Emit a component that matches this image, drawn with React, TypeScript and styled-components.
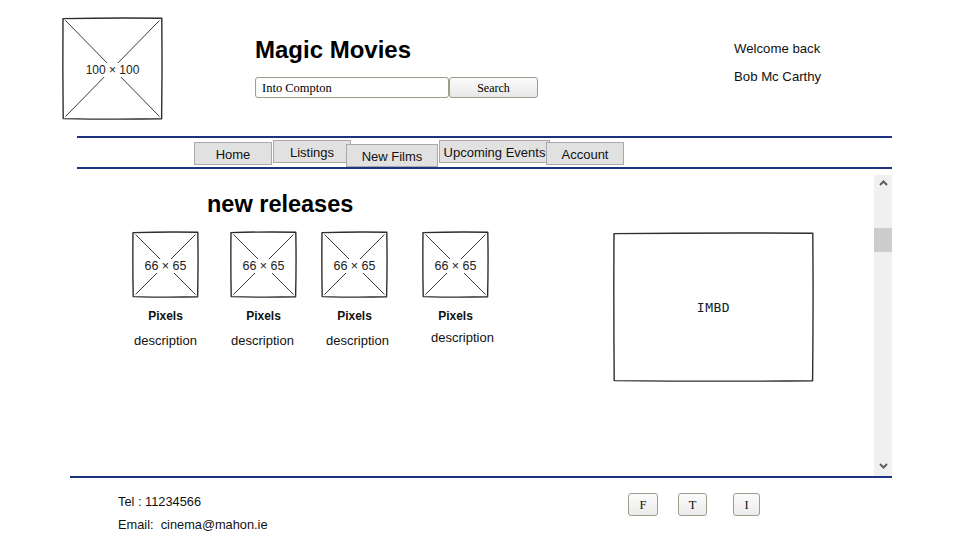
import React from "react";
import styled, { createGlobalStyle } from "styled-components";

const GlobalStyle = createGlobalStyle`
  html, body { margin: 0; padding: 0; background: #fff; }
  body { font-family: "Liberation Sans", Arial, sans-serif; color: #111; }
  * { box-sizing: border-box; }
`;

const NAVY = "#1e3282";

const Page = styled.div`
  width: 977px;
  height: 542px;
  overflow: hidden;
  background: #fff;
`;

const Header = styled.header`
  display: flex;
  align-items: flex-start;
  height: 136px;
  padding: 17px 0 0 62px;
`;

const TitleCol = styled.div`
  width: 479px;
  margin-left: 92px;
  padding-top: 19px;
  display: flex;
  flex-direction: column;
`;

const Title = styled.h1`
  margin: 0;
  font-size: 24px;
  line-height: 28px;
  font-weight: bold;
  color: #000;
`;

const SearchRow = styled.form`
  display: flex;
  margin-top: 13px;
`;

const SearchInput = styled.input`
  width: 194px;
  height: 21px;
  border: 1px solid #a39a8e;
  border-radius: 3px;
  font: 12.5px "Liberation Serif", "Times New Roman", serif;
  padding: 1px 6px 0;
  color: #000;
  outline: none;
  background: #fff;
`;

const SearchButton = styled.button`
  width: 89px;
  height: 21px;
  border: 1px solid #a39a8e;
  border-radius: 3px;
  background: linear-gradient(#fcfcfc, #e8e8e8);
  font: 12px "Liberation Serif", "Times New Roman", serif;
  color: #000;
  padding: 1px 0 0;
`;

const Welcome = styled.div`
  margin-top: 24px;
  display: flex;
  flex-direction: column;
  gap: 12px;
  font-size: 13.2px;
  line-height: 16px;
  color: #111;
`;

const NavBar = styled.nav`
  width: 815px;
  height: 33px;
  margin-left: 77px;
  border-top: 2px solid ${NAVY};
  border-bottom: 2px solid ${NAVY};
  display: flex;
  align-items: flex-start;
  padding-left: 117px;
`;

const Tab = styled.a<{ $w: number; $top: number; $shift: number }>`
  position: relative;
  display: flex;
  align-items: center;
  justify-content: center;
  width: ${(p) => p.$w}px;
  height: 23px;
  padding-top: 2px;
  margin-top: ${(p) => p.$top}px;
  margin-left: ${(p) => p.$shift}px;
  background: #e1e1e1;
  border: 1px solid #a9a9a9;
  font-size: 13px;
  color: #111;
  text-decoration: none;
  white-space: nowrap;
`;

const Main = styled.main`
  display: flex;
  width: 822px;
  height: 309px;
  margin-left: 70px;
  border-bottom: 2px solid ${NAVY};
`;

const Content = styled.section`
  flex: 1;
  padding-top: 21px;
`;

const SectionTitle = styled.h2`
  margin: 0 0 13px 137px;
  font-size: 23.5px;
  line-height: 28px;
  font-weight: bold;
  color: #000;
`;

const Row = styled.div`
  display: flex;
  align-items: flex-start;
`;

const Card = styled.div<{ $gap: number }>`
  width: 67px;
  margin-left: ${(p) => p.$gap}px;
  display: flex;
  flex-direction: column;
  align-items: center;
`;

const CardName = styled.div`
  margin-top: 11px;
  font-size: 12px;
  line-height: 14px;
  font-weight: bold;
  color: #111;
  white-space: nowrap;
`;

const CardDesc = styled.div<{ $dx: number; $dy: number }>`
  margin-top: ${(p) => 10 + p.$dy}px;
  margin-left: ${(p) => p.$dx * 2}px;
  font-size: 13px;
  line-height: 16px;
  color: #111;
  white-space: nowrap;
`;

const Sketch = styled.div<{ $w: number; $h: number; $mt?: number; $ml?: number }>`
  position: relative;
  flex-shrink: 0;
  width: ${(p) => p.$w}px;
  height: ${(p) => p.$h}px;
  margin-top: ${(p) => p.$mt ?? 0}px;
  margin-left: ${(p) => p.$ml ?? 0}px;
  display: flex;
  align-items: center;
  justify-content: center;
`;

const SketchLines = styled.svg`
  position: absolute;
  left: 0;
  top: 0;
  overflow: visible;
`;

const SketchLabel = styled.span<{ $size: number }>`
  position: relative;
  margin-top: 3px;
  background: #fff;
  padding: 1px 1px;
  font-size: ${(p) => p.$size}px;
  line-height: 1;
  color: #222;
  white-space: nowrap;
`;

const ImdbLabel = styled.span`
  position: relative;
  font-family: "DejaVu Sans Mono", "Liberation Mono", monospace;
  font-size: 13px;
  color: #0d1b2a;
  letter-spacing: 0.5px;
`;

const Scrollbar = styled.div`
  width: 18px;
  height: 301px;
  margin-top: 6px;
  background: #f0f0f0;
  display: flex;
  flex-direction: column;
`;

const ScrollArrow = styled.div<{ $end?: boolean }>`
  height: 16px;
  margin-top: ${(p) => (p.$end ? "auto" : "0")};
  margin-bottom: ${(p) => (p.$end ? "2px" : "0")};
  display: flex;
  align-items: center;
  justify-content: center;
`;

const Thumb = styled.div`
  height: 24px;
  margin-top: 37px;
  background: #cdcdcd;
`;

const Footer = styled.footer`
  display: flex;
  align-items: flex-start;
  padding: 12px 0 0 118px;
`;

const Contact = styled.div`
  width: 510px;
  font-size: 12.8px;
  line-height: 23px;
  color: #111;
`;

const Socials = styled.div`
  display: flex;
  margin-top: 3px;
`;

const SocialButton = styled.button<{ $w: number; $gap: number }>`
  width: ${(p) => p.$w}px;
  height: 23px;
  margin-left: ${(p) => p.$gap}px;
  padding: 1px 0 0;
  border: 1px solid #a39a8e;
  border-radius: 3px;
  background: linear-gradient(#fcfcfc, #ebebeb);
  font: 12.5px "Liberation Serif", "Times New Roman", serif;
  color: #111;
`;

type SketchBoxProps = {
  w: number;
  h: number;
  label?: string;
  size?: number;
  cross?: boolean;
  mt?: number;
  ml?: number;
  children?: React.ReactNode;
};

function SketchBox({ w, h, label, size = 12, cross = true, mt, ml, children }: SketchBoxProps) {
  const border = `M1,1.6 Q${w * 0.5},0.6 ${w - 1.2},1.2 Q${w - 0.6},${h * 0.5} ${w - 1.4},${h - 1.2} Q${w * 0.5},${h - 0.4} 1.2,${h - 1.4} Q0.6,${h * 0.5} 1,1.6 Z`;
  return (
    <Sketch $w={w} $h={h} $mt={mt} $ml={ml}>
      <SketchLines width={w} height={h} viewBox={`0 0 ${w} ${h}`}>
        <path d={border} fill="none" stroke="#2e2e2e" strokeWidth={1.4} strokeLinejoin="round" />
        {cross && (
          <>
            <path d={`M3.5,3.5 L${w - 3.5},${h - 3.5}`} fill="none" stroke="#3a3a3a" strokeWidth={1} />
            <path d={`M${w - 3.5},3.5 L3.5,${h - 3.5}`} fill="none" stroke="#3a3a3a" strokeWidth={1} />
          </>
        )}
      </SketchLines>
      {label && <SketchLabel $size={size}>{label}</SketchLabel>}
      {children}
    </Sketch>
  );
}

function Chevron({ up }: { up?: boolean }) {
  return (
    <svg width="9" height="6" viewBox="0 0 9 6">
      <path
        d={up ? "M1,5 L4.5,1.5 L8,5" : "M1,1 L4.5,4.5 L8,1"}
        fill="none"
        stroke="#5f5f5f"
        strokeWidth={2}
      />
    </svg>
  );
}

const tabs = [
  { label: "Home", w: 78, top: 4, shift: 0 },
  { label: "Listings", w: 78, top: 2, shift: 1 },
  { label: "New Films", w: 92, top: 6, shift: -5 },
  { label: "Upcoming Events", w: 111, top: 2, shift: 1 },
  { label: "Account", w: 78, top: 4, shift: -4 },
];

const films = [
  { gap: 62, dx: 0, dy: 0 },
  { gap: 31, dx: -1, dy: 0 },
  { gap: 24, dx: 3, dy: 0 },
  { gap: 34, dx: 7, dy: -3 },
];

const socials = [
  { label: "F", w: 30, gap: 0 },
  { label: "T", w: 29, gap: 20 },
  { label: "I", w: 27, gap: 26 },
];

export default function App() {
  return (
    <Page>
      <GlobalStyle />
      <Header>
        <SketchBox w={101} h={103} label="100 × 100" size={12} />
        <TitleCol>
          <Title>Magic Movies</Title>
          <SearchRow onSubmit={(e) => e.preventDefault()}>
            <SearchInput defaultValue="Into Compton" />
            <SearchButton type="submit">Search</SearchButton>
          </SearchRow>
        </TitleCol>
        <Welcome>
          <span>Welcome back</span>
          <span>Bob Mc Carthy</span>
        </Welcome>
      </Header>

      <NavBar>
        {tabs.map((t) => (
          <Tab key={t.label} href="#" $w={t.w} $top={t.top} $shift={t.shift}>
            {t.label}
          </Tab>
        ))}
      </NavBar>

      <Main>
        <Content>
          <SectionTitle>new releases</SectionTitle>
          <Row>
            {films.map((f, i) => (
              <Card key={i} $gap={f.gap}>
                <SketchBox w={67} h={67} label="66 × 65" size={12.5} />
                <CardName>Pixels</CardName>
                <CardDesc $dx={f.dx} $dy={f.dy}>description</CardDesc>
              </Card>
            ))}
            <SketchBox w={201} h={150} cross={false} mt={1} ml={124}>
              <ImdbLabel>IMBD</ImdbLabel>
            </SketchBox>
          </Row>
        </Content>
        <Scrollbar>
          <ScrollArrow>
            <Chevron up />
          </ScrollArrow>
          <Thumb />
          <ScrollArrow $end>
            <Chevron />
          </ScrollArrow>
        </Scrollbar>
      </Main>

      <Footer>
        <Contact>
          <div>Tel : 11234566</div>
          <div>Email:&nbsp; cinema@mahon.ie</div>
        </Contact>
        <Socials>
          {socials.map((s) => (
            <SocialButton key={s.label} $w={s.w} $gap={s.gap}>
              {s.label}
            </SocialButton>
          ))}
        </Socials>
      </Footer>
    </Page>
  );
}
